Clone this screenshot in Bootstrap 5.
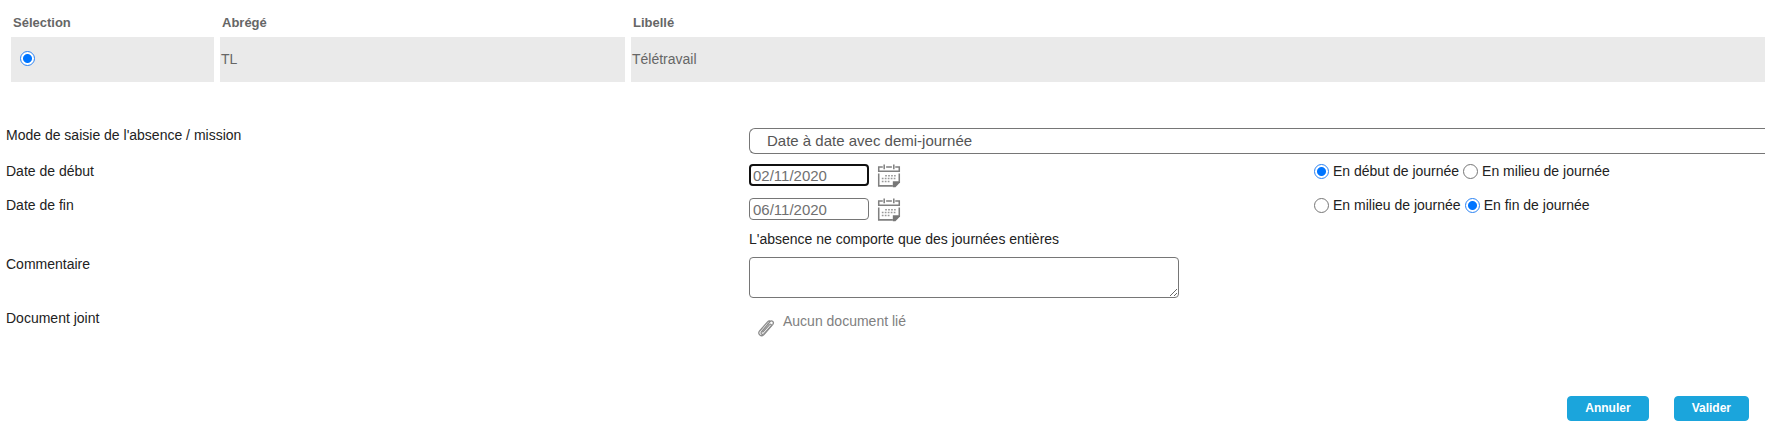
<!DOCTYPE html>
<html lang="fr">
<head>
<meta charset="utf-8">
<meta name="viewport" content="width=device-width, initial-scale=1">
<title>Saisie d'absence</title>
<link href="https://cdn.jsdelivr.net/npm/bootstrap@5.3.0/dist/css/bootstrap.min.css" rel="stylesheet">
<style>
body { font-family: "Liberation Sans", Arial, sans-serif; font-size: 14px; line-height: 20px; color: #222; background: #fff; }
.page { padding: 0 15px 20px 6px; }
.choices { border-collapse: separate; border-spacing: 6px 0; margin: 0 -6px 0 -1px; width: calc(100% + 7px); table-layout: fixed; color: #666; }
.choices th { height: 37px; padding: 9px 2px 0; font-size: 13px; line-height: 20px; vertical-align: middle; border: 0; }
.choices td { height: 45px; padding: 0 1px 2px; background: #eaeaea; vertical-align: middle; }
.choices .w-sel { width: 203px; }
.choices .w-abr { width: 405px; }
.entry { display: grid; grid-template-columns: 743fr 565fr 451fr; margin-top: 43px; }
.entry .wide { grid-column: 2 / -1; }
.entry > * { min-width: 0; }
.entry .ctl { padding-top: 3px; }
.line-mode { min-height: 36px; }
.line-date { min-height: 34px; }
.line-info { min-height: 25px; }
.line-note { min-height: 54px; }
.line-file { min-height: 67px; }
input[type=radio].rd { appearance: none; width: 15px; height: 15px; margin: 0; flex: none; border: 1px solid #767676; border-radius: 50%; background: #fff; }
input[type=radio].rd:checked { border: 1px solid #2b83f3; background: radial-gradient(circle, #0075ff 4px, #fff 5px); }
.form-select.mode { height: 26px; padding: 0 17px; font-size: 15px; line-height: 24px; color: #555; background: #fff; border: 1px solid #767676; border-right: 0; border-radius: 6px 0 0 6px; }
.form-control.date { width: 120px; height: 22px; padding: 0 3px; font-size: 15px; line-height: 20px; color: #707070; border: 1px solid #767676; border-radius: 4px; }
.form-control.date.current { border: 2px solid #101010; padding: 0 2px; }
.form-control.note { width: 430px; max-width: 100%; height: 41px; min-height: 41px; padding: 2px; border: 1px solid #767676; border-radius: 4px; }
.calbtn { border: 0; padding: 0; background: none; line-height: 0; }
.muted { color: #808080; }
.btn.act { padding: 0 17px; height: 25px; font-size: 12px; line-height: 23px; font-weight: 700; color: #fff; background: #1ba5dc; border: 1px solid #1ba5dc; border-radius: 4px; }
.actions { gap: 25px; padding-right: 16px; margin-top: 21px; }
</style>
</head>
<body>
<svg width="0" height="0" class="position-absolute" aria-hidden="true">
  <symbol id="cal" viewBox="0 0 24 25">
    <g fill="none" stroke="#808080" stroke-width="1.6">
      <path d="M5.500 3.200H1.300v4.300h21.400V3.200h-4.200M9 3.200h6"/>
      <path d="M7 .5v5M17 .5v5"/>
      <path d="M1.300 10v12.800h14.700M22.700 10v8.500"/>
    </g>
    <path d="M16 24.200v-6.200h7.500v1.200l-4.800 5z" fill="#777"/>
    <path d="M8 12.200h11M4.500 15.200h14.500M4.500 18.200h9" stroke="#999" stroke-width="1.500" stroke-dasharray="1.800 1.300"/>
  </symbol>
</svg>
<main class="page">
  <table class="choices">
    <thead>
      <tr><th class="w-sel" scope="col">Sélection</th><th class="w-abr" scope="col">Abrégé</th><th scope="col">Libellé</th></tr>
    </thead>
    <tbody>
      <tr>
        <td><div class="d-flex ps-1 ms-1"><input class="rd" type="radio" name="type" aria-label="Télétravail" checked></div></td>
        <td>TL</td>
        <td>Télétravail</td>
      </tr>
    </tbody>
  </table>

  <form>
    <div class="entry">
      <label class="line-mode" for="mode">Mode de saisie de l'absence / mission</label>
      <div class="wide ctl">
        <select class="form-select mode" id="mode"><option>Date à date avec demi-journée</option></select>
      </div>

      <label class="line-date" for="debut">Date de début</label>
      <div class="ctl d-flex align-items-start">
        <input class="form-control date current" id="debut" type="text" value="02/11/2020">
        <button class="calbtn ms-2" type="button" aria-label="Choisir la date de début"><svg width="24" height="24"><use href="#cal"/></svg></button>
      </div>
      <div class="d-flex align-items-start gap-1">
        <label class="d-flex align-items-center gap-1"><input class="rd" type="radio" name="d1" checked>En début de journée</label>
        <label class="d-flex align-items-center gap-1"><input class="rd" type="radio" name="d1">En milieu de journée</label>
      </div>

      <label class="line-date" for="fin">Date de fin</label>
      <div class="ctl d-flex align-items-start">
        <input class="form-control date" id="fin" type="text" value="06/11/2020">
        <button class="calbtn ms-2" type="button" aria-label="Choisir la date de fin"><svg width="24" height="24"><use href="#cal"/></svg></button>
      </div>
      <div class="d-flex align-items-start gap-1">
        <label class="d-flex align-items-center gap-1"><input class="rd" type="radio" name="d2">En milieu de journée</label>
        <label class="d-flex align-items-center gap-1"><input class="rd" type="radio" name="d2" checked>En fin de journée</label>
      </div>

      <div class="line-info"></div>
      <div class="wide">L'absence ne comporte que des journées entières</div>

      <label class="line-note" for="note">Commentaire</label>
      <div class="wide ctl"><textarea class="form-control note" id="note"></textarea></div>

      <div class="line-file">Document joint</div>
      <div class="wide ctl d-flex align-items-start muted ps-2">
        <svg class="mt-2" width="18" height="18" viewBox="0 0 18 20" fill="none" stroke="#8c8c8c" stroke-width="1.400" stroke-linecap="round" aria-hidden="true">
          <path d="M5.500 14.500L13 6.200c1-1.200 2.600.2 1.600 1.400L7 16.200c-2 2.200-4.700 0-2.900-2.200L11.500 5.300"/>
          <path d="M11.500 5.300L13.300 3.200c2.300-2.400 5.100.2 3.300 2.700L6.700 17.300c-3 3.200-7.500-.5-4.800-4L10.500 3.400c.8-.9 1.700-1.500 2.800-1.300"/>
        </svg>
        <span class="ms-2">Aucun document lié</span>
      </div>
    </div>

    <div class="actions d-flex justify-content-end">
      <button class="btn act" type="button">Annuler</button>
      <button class="btn act" type="submit">Valider</button>
    </div>
  </form>
</main>
<script src="https://cdn.jsdelivr.net/npm/bootstrap@5.3.0/dist/js/bootstrap.bundle.min.js"></script>
</body>
</html>
